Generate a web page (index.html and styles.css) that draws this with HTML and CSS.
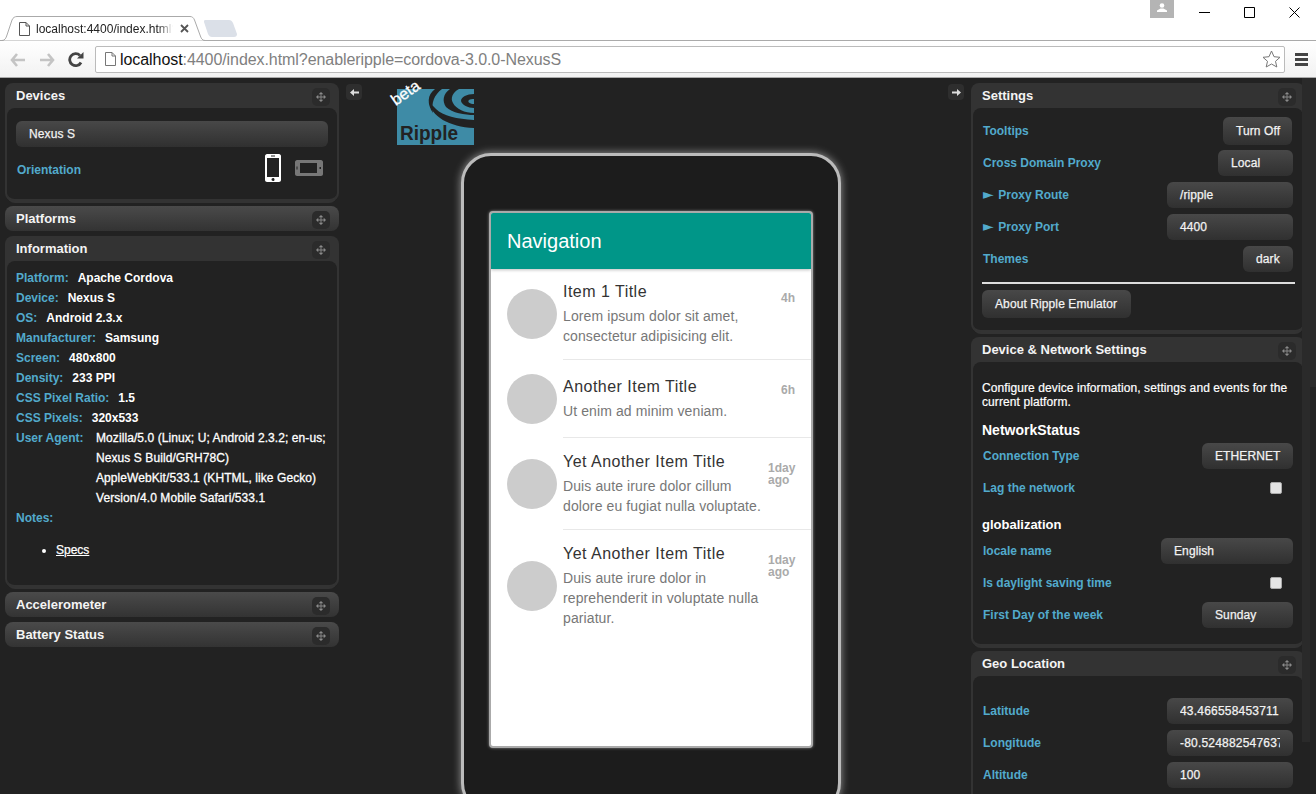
FILE: index.html
```html
<!DOCTYPE html>
<html lang="en">
<head>
    <meta charset="UTF-8">
    <title>localhost:4400/index.html</title>
    <link rel="stylesheet" href="styles.css">
</head>
<body>

<svg class="defs" width="0" height="0">
    <symbol id="move" viewBox="0 0 11 11">
        <path d="M5.500 0 8 2.500H6V5H8.500V3L11 5.500 8.500 8V6H6V8.500H8L5.500 11 3 8.500H5V6H2.500V8L0 5.500 2.500 3V5H5V2.500H3Z"/>
    </symbol>
</svg>

<!-- browser chrome -->
<header class="browser">
    <div class="tabstrip">
        <div class="tab">
            <svg class="tab-shape" width="206" height="25" viewBox="0 0 206 25"><path d="M0 24.500H2C5 24.500 6 22 7 19L12 4C13 1.500 15 .5 17 .5H190C192 .5 193.500 1.500 194.500 4L200 19C201 22 202 24.500 205 24.500H206" fill="#fff" stroke="#aaa"/></svg>
            <svg class="page-icon" width="11" height="14" viewBox="0 0 11 14"><path d="M.5.5H7L10.500 4V13.500H.5ZM7 .5V4H10.500" fill="#fff" stroke="#555"/></svg>
            <span class="tab-title">localhost:4400/index.html?enableripple</span>
            <svg class="tab-close" width="9" height="9" viewBox="0 0 9 9"><path d="M1 1 8 8M8 1 1 8" stroke="#555" stroke-width="1.800"/></svg>
        </div>
        <svg class="new-tab" width="33" height="17" viewBox="0 0 33 17"><path d="M1 0H25C27 0 28 1 29 3L33 14C33 16 32 17 30 17H8C6 17 5 16 4 14L0 2C0 1 0 0 1 0Z" fill="#dbe0e8"/></svg>
        <div class="window-controls">
            <span class="user-badge"><svg width="10" height="9" viewBox="0 0 10 9"><circle cx="5" cy="2.500" r="2.300" fill="#fff"/><path d="M0 9V7.500L3.500 5.500H6.500L10 7.500V9Z" fill="#fff"/></svg></span>
            <svg class="win-btn" width="11" height="11" viewBox="0 0 11 11"><path d="M0 5.500H11" stroke="#000"/></svg>
            <svg class="win-btn" width="11" height="11" viewBox="0 0 11 11"><path d="M.5.5H10.500V10.500H.5Z" fill="none" stroke="#000"/></svg>
            <svg class="win-btn" width="11" height="11" viewBox="0 0 11 11"><path d="M.5.5 10.500 10.500M10.500.5 .5 10.500" stroke="#000"/></svg>
        </div>
    </div>
    <div class="toolbar">
        <svg class="nav-icon" width="16" height="14" viewBox="0 0 16 14"><path d="M7 1 2 7 7 13M2 7H15" fill="none" stroke="#c4c4c4" stroke-width="2.600"/></svg>
        <svg class="nav-icon" width="16" height="14" viewBox="0 0 16 14"><path d="M9 1 14 7 9 13M14 7H1" fill="none" stroke="#c4c4c4" stroke-width="2.600"/></svg>
        <svg class="nav-icon" width="16" height="16" viewBox="0 0 16 16"><path d="M13 10.500A6 6 0 1 1 12 3.500" fill="none" stroke="#444" stroke-width="2.800"/><path d="M9 6.500H15.500V0Z" fill="#444"/></svg>
        <div class="omnibox">
            <svg width="11" height="14" viewBox="0 0 11 14"><path d="M.5.5H7L10.500 4V13.500H.5ZM7 .5V4H10.500" fill="#fff" stroke="#777"/></svg>
            <span class="url"><span class="url-host">localhost</span>:4400/index.html?enableripple=cordova-3.0.0-NexusS</span>
            <svg class="star" width="19" height="18" viewBox="0 0 19 18"><path d="M9.500 1 12 6.700 18 7.300 13.500 11.300 14.800 17 9.500 14 4.200 17 5.500 11.300 1 7.300 7 6.700Z" fill="#fff" stroke="#777"/></svg>
        </div>
        <div class="menu-icon"><i></i><i></i><i></i></div>
    </div>
</header>

<main class="emulator">

    <!-- left column -->
    <aside class="column">
        <section class="panel">
            <h2 class="panel-head">Devices <span class="grip"><svg><use href="#move"/></svg></span></h2>
            <div class="panel-body devices-body">
                <div class="select">Nexus S</div>
                <div class="row orientation-row">
                    <span class="label">Orientation</span>
                    <span class="orient-icons">
                        <svg width="16" height="28" viewBox="0 0 16 28"><path fill-rule="evenodd" d="M2 0H14C15 0 16 1 16 2V26C16 27 15 28 14 28H2C1 28 0 27 0 26V2C0 1 1 0 2 0ZM2 4V23H14V4ZM6 1.500V2.500H10V1.500ZM8 24C7 24 6.500 25 6.500 25.500S7 27 8 27 9.500 26.500 9.500 25.500 9 24 8 24Z" fill="#fff"/></svg>
                        <svg width="28" height="16" viewBox="0 0 28 16"><path fill-rule="evenodd" d="M2 0H26C27 0 28 1 28 2V14C28 15 27 16 26 16H2C1 16 0 15 0 14V2C0 1 1 0 2 0ZM5 3V13H22V3ZM1.500 6.500V9.500H2.500V6.500ZM24.500 7V9H26V7Z" fill="#777"/></svg>
                    </span>
                </div>
            </div>
        </section>

        <section class="panel collapsed">
            <h2 class="panel-head">Platforms <span class="grip"><svg><use href="#move"/></svg></span></h2>
        </section>

        <section class="panel">
            <h2 class="panel-head">Information <span class="grip"><svg><use href="#move"/></svg></span></h2>
            <div class="panel-body info-body">
                <div class="info-line"><span class="label">Platform:</span><b>Apache Cordova</b></div>
                <div class="info-line"><span class="label">Device:</span><b>Nexus S</b></div>
                <div class="info-line"><span class="label">OS:</span><b>Android 2.3.x</b></div>
                <div class="info-line"><span class="label">Manufacturer:</span><b>Samsung</b></div>
                <div class="info-line"><span class="label">Screen:</span><b>480x800</b></div>
                <div class="info-line"><span class="label">Density:</span><b>233 PPI</b></div>
                <div class="info-line"><span class="label">CSS Pixel Ratio:</span><b>1.5</b></div>
                <div class="info-line"><span class="label">CSS Pixels:</span><b>320x533</b></div>
                <div class="info-line info-agent"><span class="label">User Agent:</span><span class="agent-text">Mozilla/5.0 (Linux; U; Android 2.3.2; en-us; Nexus S Build/GRH78C) AppleWebKit/533.1 (KHTML, like Gecko) Version/4.0 Mobile Safari/533.1</span></div>
                <div class="info-line"><span class="label">Notes:</span></div>
                <ul class="notes">
                    <li><a href="#">Specs</a></li>
                </ul>
            </div>
        </section>

        <section class="panel collapsed">
            <h2 class="panel-head">Accelerometer <span class="grip"><svg><use href="#move"/></svg></span></h2>
        </section>
        <section class="panel collapsed">
            <h2 class="panel-head">Battery Status <span class="grip"><svg><use href="#move"/></svg></span></h2>
        </section>
    </aside>

    <!-- device in the middle -->
    <div class="stage">
        <div class="stage-top">
            <span class="arrow-btn"><svg width="9" height="7" viewBox="0 0 9 7"><path d="M4 0V2.500H9V4.500H4V7L0 3.500Z" fill="#ddd"/></svg></span>
            <div class="logo">
                <svg width="77" height="56" viewBox="0 0 77 56">
                    <rect width="77" height="56" fill="#3e8ba6"/>
                    <path d="M32 13C34 27 52 38 77 39V31C60 30 46 27 39 20 35 16 33 14 32 13Z" fill="#222"/>
                    <path d="M38 0C30 6 30 15 36 24 34 14 37 6 45 0Z" fill="#222"/>
                    <path d="M53 0C46 5 45 12 49 18 55 24 68 26 77 26V24C68 24 59 20 56 14 53 9 56 3 62 0Z" fill="#222"/>
                    <path d="M77 5C70 5 64 8 64 12 65 16 71 19 77 19V15C73 15 70 13 72 11 73 10 75 10 77 10Z" fill="#222"/>
                    <text class="logo-word" x="3" y="51" textLength="58" lengthAdjust="spacingAndGlyphs">Ripple</text>
                </svg>
                <span class="beta">beta</span>
            </div>
            <span class="arrow-btn arrow-right"><svg width="9" height="7" viewBox="0 0 9 7"><path d="M5 0V2.500H0V4.500H5V7L9 3.500Z" fill="#ddd"/></svg></span>
        </div>

        <div class="phone">
            <div class="screen">
                <div class="app-bar">Navigation</div>
                <ul class="items">
                    <li class="item">
                        <span class="avatar"></span>
                        <div class="item-main">
                            <div class="item-text">
                                <div class="item-title">Item 1 Title</div>
                                <p class="item-sub">Lorem ipsum dolor sit amet, consectetur adipisicing elit.</p>
                            </div>
                            <span class="item-time">4h</span>
                        </div>
                    </li>
                    <li class="item">
                        <span class="avatar"></span>
                        <div class="item-main">
                            <div class="item-text">
                                <div class="item-title">Another Item Title</div>
                                <p class="item-sub">Ut enim ad minim veniam.</p>
                            </div>
                            <span class="item-time">6h</span>
                        </div>
                    </li>
                    <li class="item">
                        <span class="avatar"></span>
                        <div class="item-main">
                            <div class="item-text">
                                <div class="item-title">Yet Another Item Title</div>
                                <p class="item-sub">Duis aute irure dolor cillum dolore eu fugiat nulla voluptate.</p>
                            </div>
                            <span class="item-time">1day ago</span>
                        </div>
                    </li>
                    <li class="item item-last">
                        <span class="avatar"></span>
                        <div class="item-main">
                            <div class="item-text">
                                <div class="item-title">Yet Another Item Title</div>
                                <p class="item-sub">Duis aute irure dolor in reprehenderit in voluptate nulla pariatur.</p>
                            </div>
                            <span class="item-time">1day ago</span>
                        </div>
                    </li>
                </ul>
            </div>
        </div>
    </div>

    <!-- right column -->
    <aside class="column column-right">
        <section class="panel">
            <h2 class="panel-head">Settings <span class="grip"><svg><use href="#move"/></svg></span></h2>
            <div class="panel-body settings-body">
                <div class="row"><span class="label">Tooltips</span><span class="select btn-turnoff">Turn Off</span></div>
                <div class="row"><span class="label">Cross Domain Proxy</span><span class="select btn-local">Local</span></div>
                <div class="row"><span class="label"><span class="tri">►</span> Proxy Route</span><span class="select input-short">/ripple</span></div>
                <div class="row"><span class="label"><span class="tri">►</span> Proxy Port</span><span class="select input-short">4400</span></div>
                <div class="row"><span class="label">Themes</span><span class="select btn-dark">dark</span></div>
                <hr class="rule">
                <span class="select btn-about">About Ripple Emulator</span>
            </div>
        </section>

        <section class="panel">
            <h2 class="panel-head">Device &amp; Network Settings <span class="grip"><svg><use href="#move"/></svg></span></h2>
            <div class="panel-body network-body">
                <p class="intro">Configure device information, settings and events for the current platform.</p>
                <h3 class="group-title group-network">NetworkStatus</h3>
                <div class="row"><span class="label">Connection Type</span><span class="select btn-ethernet">ETHERNET</span></div>
                <div class="row"><span class="label">Lag the network</span><span class="checkbox"></span></div>
                <h3 class="group-title group-global">globalization</h3>
                <div class="row"><span class="label">locale name</span><span class="select btn-locale">English</span></div>
                <div class="row"><span class="label">Is daylight saving time</span><span class="checkbox"></span></div>
                <div class="row"><span class="label">First Day of the week</span><span class="select btn-week">Sunday</span></div>
            </div>
        </section>

        <section class="panel">
            <h2 class="panel-head">Geo Location <span class="grip"><svg><use href="#move"/></svg></span></h2>
            <div class="panel-body geo-body">
                <div class="row"><span class="label">Latitude</span><span class="select input-short"><span class="clip">43.466558453711</span></span></div>
                <div class="row"><span class="label">Longitude</span><span class="select input-short"><span class="clip">-80.524882547637</span></span></div>
                <div class="row"><span class="label">Altitude</span><span class="select input-short">100</span></div>
            </div>
        </section>
    </aside>

    <div class="scrollbars">
        <span class="thumb-inner"></span>
        <span class="thumb-outer"></span>
    </div>
</main>

</body>
</html>
```
FILE: styles.css
```css
* {
    box-sizing: border-box;
}

html, body {
    height: 794px;
    overflow: hidden;
}

body {
    margin: 0;
    background-color: #222;
    color: #fff;
    font-family: "Liberation Sans", Arial, sans-serif;
    font-size: 12px;
}

.defs {
    display: block;
    height: 0;
}

/* browser chrome */
.browser {
    height: 78px;
    background-color: #fff;
    color: #000;
}

.tabstrip {
    height: 41px;
    display: flex;
    align-items: flex-end;
    border-bottom: 1px solid #aaa;
    position: relative;
}

.tab {
    width: 206px;
    height: 25px;
    margin-bottom: -1px;
    position: relative;
    display: flex;
    align-items: center;
    padding-left: 19px;
}

.tab-shape {
    position: absolute;
    left: 0;
    top: 0;
}

.page-icon, .tab-title, .tab-close {
    position: relative;
}

.tab-title {
    margin-left: 6px;
    width: 137px;
    overflow: hidden;
    white-space: nowrap;
    font-size: 12px;
    color: #222;
    -webkit-mask-image: linear-gradient(to right, #000 122px, transparent 137px);
    mask-image: linear-gradient(to right, #000 122px, transparent 137px);
}

.tab-close {
    margin-left: 7px;
}

.new-tab {
    margin-left: -2px;
    margin-bottom: 3px;
}

.window-controls {
    margin-left: auto;
    align-self: flex-start;
    display: flex;
    align-items: flex-start;
}

.user-badge {
    width: 24px;
    height: 18px;
    margin-right: 8px;
    background-color: #b4b4b4;
    display: flex;
    justify-content: center;
    padding-top: 3px;
}

.win-btn {
    margin: 7px 17px 0 17px;
}

.win-btn:last-child {
    margin-right: 16px;
}

.toolbar {
    height: 37px;
    display: flex;
    align-items: center;
    padding: 0 8px 0 10px;
    background: linear-gradient(#fff, #f2f2f2);
    border-bottom: 1px solid #aaa;
}

.nav-icon {
    margin: 2px 13px 0 0;
}

.omnibox {
    width: 1190px;
    height: 27px;
    margin-left: -2px;
    display: flex;
    align-items: center;
    padding: 0 3px 0 9px;
    background-color: #fff;
    border: 1px solid #bbb;
    border-radius: 2px;
}

.url {
    margin-left: 4px;
    padding-top: 2px;
    font-size: 16px;
    letter-spacing: -.07px;
    color: #808080;
    white-space: nowrap;
}

.url-host {
    color: #111;
}

.star {
    margin-left: auto;
}

.menu-icon {
    margin-left: 10px;
    width: 13px;
}

.menu-icon i {
    display: block;
    height: 3px;
    margin: 2px 0;
    background-color: #444;
}

/* layout */
.emulator {
    height: 716px;
    display: flex;
    overflow: hidden;
    position: relative;
}

.column {
    width: 334px;
    flex: none;
    margin: 5px 0 0 5px;
}

.column-right {
    margin-left: 0;
}

.stage {
    flex: none;
    width: 632px;
}

/* panels */
.panel {
    margin-bottom: 5px;
    border-radius: 8px;
    background-color: #333;
}

.panel-head {
    height: 25px;
    margin: 0;
    padding: 0 9px 0 11px;
    display: flex;
    align-items: center;
    justify-content: space-between;
    font-size: 13px;
    font-weight: bold;
    line-height: 25px;
    color: #f4f4f4;
}

.collapsed {
    background: linear-gradient(#4a4a4a, #333);
}

.grip {
    width: 18px;
    height: 18px;
    margin-top: 2px;
    display: flex;
    align-items: center;
    justify-content: center;
    background-color: #2b2b2b;
    border-radius: 5px;
}

.grip svg {
    width: 10px;
    height: 10px;
    fill: #8a8a8a;
}

.panel-body {
    margin: 0 2px;
    padding: 0 9px;
    background-color: #222;
    border-radius: 8px;
    border-bottom: 2px solid #333;
    position: relative;
    box-shadow: 0 2px 0 #333;
}

.label {
    font-weight: bold;
    color: #52aacc;
}

.row {
    height: 32px;
    display: flex;
    align-items: center;
    justify-content: space-between;
    padding-left: 1px;
}

.select {
    display: block;
    height: 26px;
    flex: none;
    padding: 0 0 0 13px;
    line-height: 27px;
    letter-spacing: .1px;
    white-space: nowrap;
    font-weight: normal;
    color: #f2f2f2;
    background: linear-gradient(#484848, #303030);
    border-radius: 6px;
    -webkit-text-stroke: .25px #f2f2f2;
}

/* left */
.devices-body {
    height: 93px;
    padding-top: 13px;
}

.orientation-row {
    height: 28px;
    margin-top: 7px;
}

.orientation-row .label {
    padding-top: 4px;
}

.orient-icons {
    display: flex;
    align-items: center;
    gap: 14px;
    margin-right: 5px;
}

.info-body {
    height: 326px;
    padding-top: 7px;
}

.info-line {
    line-height: 20px;
}

.info-line b {
    margin-left: 9px;
    color: #fff;
}

.info-agent {
    display: flex;
}

.info-agent .label {
    width: 80px;
    flex: none;
}

.agent-text {
    width: 236px;
    letter-spacing: .08px;
    -webkit-text-stroke: .3px #fff;
}

.notes {
    margin: 12px 0 0;
    padding-left: 40px;
}

.notes li {
    line-height: 20px;
}

.notes a {
    color: #fff;
    -webkit-text-stroke: .25px #fff;
}

/* stage */
.stage-top {
    height: 75px;
    display: flex;
    padding: 6px 0 0 7px;
    position: relative;
}

.arrow-btn {
    width: 16px;
    height: 16px;
    display: flex;
    align-items: center;
    justify-content: center;
    background-color: #2e2e2e;
    border-radius: 4px;
}

.arrow-right {
    margin-left: auto;
    margin-right: 7px;
}

.logo {
    position: relative;
    margin: 5px 0 0 35px;
}

.logo svg {
    display: block;
}

.logo-word {
    font-family: "Liberation Sans", Arial, sans-serif;
    font-size: 21px;
    font-weight: bold;
    fill: #222;
}

.beta {
    position: absolute;
    left: -7px;
    top: -5px;
    font-size: 16px;
    color: #fff;
    -webkit-text-stroke: .3px #fff;
    transform: rotate(-35deg);
}

.phone {
    width: 380px;
    height: 660px;
    margin-left: 122px;
    padding: 55px 25px 0;
    background-color: #1c1c1c;
    border: 3px solid #bbb;
    border-radius: 30px;
    box-shadow: 0 0 8px #999;
}

.screen {
    width: 324px;
    height: 537px;
    overflow: hidden;
    background-color: #fff;
    border: 2px solid #aaa;
    border-radius: 4px;
    box-shadow: 0 0 3px #888;
}

.app-bar {
    height: 56px;
    padding-left: 16px;
    line-height: 56px;
    font-size: 20px;
    color: #fff;
    background-color: #009688;
    box-shadow: 0 1px 3px rgba(0, 0, 0, .25);
    position: relative;
}

.items {
    margin: -1px 0 0;
    padding: 0;
    list-style: none;
    color: #333;
}

.item {
    min-height: 78px;
    display: flex;
    align-items: center;
    padding-left: 16px;
}

.avatar {
    width: 50px;
    height: 50px;
    flex: none;
    margin-right: 6px;
    border-radius: 50%;
    background-color: #ccc;
}

.item-main {
    flex: 1;
    min-width: 0;
    align-self: stretch;
    display: flex;
    align-items: center;
    padding-right: 16px;
    border-bottom: 1px solid #e8e8e8;
}

.item-last .item-main {
    border-bottom: none;
}

.item-text {
    width: 200px;
    padding: 13px 0;
}

.item-title {
    font-size: 16px;
    line-height: 22px;
    letter-spacing: .48px;
}

.item-sub {
    margin: 3px 0 0;
    font-size: 14px;
    line-height: 20px;
    letter-spacing: .1px;
    color: #777;
}

.item-time {
    align-self: flex-start;
    max-width: 27px;
    margin: 24px 0 0 auto;
    font-size: 12px;
    font-weight: bold;
    line-height: 12px;
    color: #aaa;
}

/* right */
.settings-body {
    height: 224px;
    padding-top: 7px;
}

.tri {
    display: inline-block;
    width: 12px;
    height: 12px;
    font-family: "DejaVu Sans", sans-serif;
    font-size: 14px;
    line-height: 12px;
}

.btn-turnoff {
    width: 69px;
    height: 28px;
    line-height: 28px;
    margin-right: 2px;
}

.btn-local {
    width: 75px;
    margin-right: 1px;
}

.input-short {
    width: 126px;
    margin-right: 1px;
}

.clip {
    display: block;
    width: 100px;
    overflow: hidden;
    letter-spacing: .2px;
}

.btn-dark {
    width: 50px;
    margin-right: 1px;
}

.rule {
    height: 2px;
    margin: 7px -1px 6px 0;
    border: none;
    background-color: #ddd;
}

.btn-about {
    width: 149px;
    height: 28px;
    line-height: 28px;
}

.network-body {
    height: 284px;
    padding-top: 19px;
}

.intro {
    margin: 0 0 13px;
    line-height: 14px;
    letter-spacing: .09px;
    -webkit-text-stroke: .2px #fff;
}

.group-title {
    margin: 0 0 2px;
    font-size: 13px;
    line-height: 16px;
}

.group-network {
    font-size: 14px;
}

.group-global {
    margin-top: 13px;
    margin-bottom: 2px;
}

.btn-ethernet {
    width: 91px;
    margin-right: 1px;
}

.btn-locale {
    width: 132px;
    margin-right: 1px;
}

.btn-week {
    width: 91px;
    margin-right: 1px;
}

.checkbox {
    width: 12px;
    height: 12px;
    margin-right: 12px;
    background-color: #e4e4e4;
    border: 1px solid #aaa;
    border-radius: 2px;
}

.geo-body {
    height: 200px;
    padding-top: 19px;
}

.scrollbars {
    position: absolute;
    top: 0;
    right: 0;
    bottom: 0;
    width: 14px;
    display: flex;
    background-color: #222;
}

.thumb-inner {
    width: 8px;
    height: 664px;
    background-color: #2a2a2a;
}

.thumb-outer {
    width: 6px;
    height: 309px;
    background-color: #2a2a2a;
}
```
